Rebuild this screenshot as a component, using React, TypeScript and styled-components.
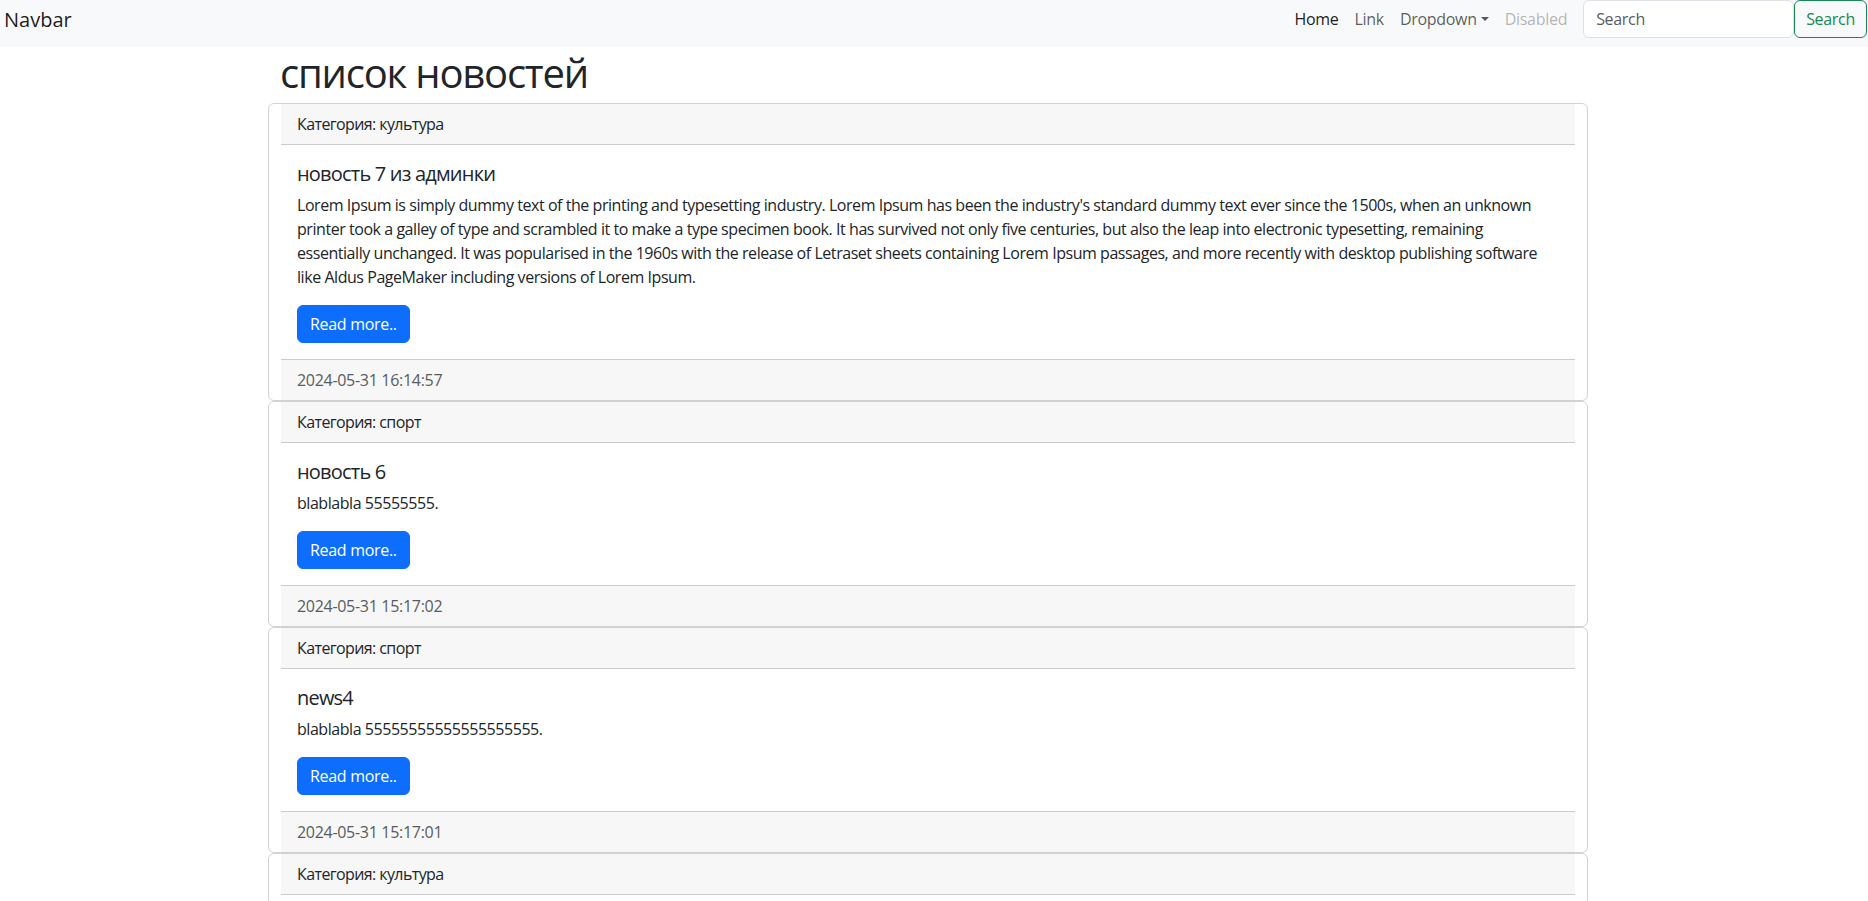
import React from 'react';
import styled, { createGlobalStyle } from 'styled-components';

const GlobalStyle = createGlobalStyle`
  * {
    box-sizing: border-box;
  }
  body {
    margin: 0;
    background: #fff;
    color: #212529;
    font-family: 'Open Sans', 'Noto Sans', sans-serif;
    font-size: 16px;
    line-height: 1.5;
  }
`;

const COLORS = {
  TEXT: '#212529',
  BORDER: 'rgba(0, 0, 0, 0.175)',
  CAP: '#f7f7f7',
  PRIMARY: '#0d6efd',
  SUCCESS: '#198754',
};

const NavbarRoot = styled.nav`
  display: flex;
  justify-content: space-between;
  align-items: flex-start;
  height: 47px;
  background: #f8f9fa;
`;

const Brand = styled.a`
  margin-left: 4px;
  padding: 5px 0;
  font-size: 20px;
  line-height: 30px;
  color: rgba(0, 0, 0, 0.9);
  text-decoration: none;
`;

const RightSection = styled.div`
  display: flex;
  align-items: flex-start;
  margin-right: 1px;
`;

const NavList = styled.ul`
  display: flex;
  list-style: none;
  margin: 0 8px 0 0;
  padding: 0;
`;

const NavLink = styled.a<{ $active?: boolean; $disabled?: boolean }>`
  display: block;
  padding: 7px 8px;
  line-height: 24px;
  letter-spacing: -0.3px;
  text-decoration: none;
  color: ${(p) =>
    p.$active ? 'rgba(0, 0, 0, 0.9)' : p.$disabled ? 'rgba(0, 0, 0, 0.3)' : 'rgba(0, 0, 0, 0.65)'};
`;

const Caret = styled.span`
  display: inline-block;
  margin-left: 0.255em;
  vertical-align: 0.255em;
  border-top: 0.3em solid;
  border-right: 0.3em solid transparent;
  border-left: 0.3em solid transparent;
`;

const SearchForm = styled.form`
  display: flex;
`;

const SearchInput = styled.input`
  width: 211px;
  height: 38px;
  padding: 6px 12px;
  font-family: inherit;
  font-size: 16px;
  letter-spacing: -0.3px;
  color: ${COLORS.TEXT};
  background: #fff;
  border: 1px solid #dee2e6;
  border-radius: 6px;
  &::placeholder {
    color: #595c5f;
  }
`;

const SearchButton = styled.button`
  height: 38px;
  padding: 6px 11px;
  font-family: inherit;
  font-size: 16px;
  letter-spacing: -0.3px;
  color: ${COLORS.SUCCESS};
  background: transparent;
  border: 1px solid ${COLORS.SUCCESS};
  border-radius: 6px;
`;

// the reference was taken with a vertical scrollbar, which shifts the centred column left
const Page = styled.div`
  padding-right: 12px;
`;

const Main = styled.main`
  width: 1320px;
  margin: 0 auto;
`;

const PageTitle = styled.h1`
  margin: 2px 0 6px;
  padding: 0 12px;
  font-size: 40px;
  font-weight: 500;
  line-height: 48px;
  letter-spacing: -1.2px;
`;

const Card = styled.article`
  display: flex;
  flex-direction: column;
  padding: 0 12px;
  border: 1px solid ${COLORS.BORDER};
  border-radius: 6px;
`;

const CardHeader = styled.div`
  padding: 8px 16px;
  line-height: 24px;
  letter-spacing: -0.6px;
  background: ${COLORS.CAP};
  border-bottom: 1px solid ${COLORS.BORDER};
`;

const CardBody = styled.div`
  padding: 16px;
`;

const CardTitle = styled.h5`
  margin: 0 0 8px;
  padding-top: 1px;
  font-size: 20px;
  font-weight: 400;
  line-height: 23px;
  letter-spacing: -0.8px;
`;

const CardText = styled.p`
  margin: 0 0 16px;
  line-height: 24px;
  letter-spacing: -0.45px;
`;

const ReadMore = styled.a`
  display: inline-block;
  padding: 6px 12px;
  line-height: 24px;
  letter-spacing: -0.3px;
  color: #fff;
  background: ${COLORS.PRIMARY};
  border: 1px solid ${COLORS.PRIMARY};
  border-radius: 6px;
  text-decoration: none;
  vertical-align: top;
`;

const CardFooter = styled.div`
  padding: 8px 16px;
  line-height: 24px;
  letter-spacing: -0.3px;
  color: #595c5f;
  background: ${COLORS.CAP};
  border-top: 1px solid ${COLORS.BORDER};
`;

const LOREM =
  "Lorem Ipsum is simply dummy text of the printing and typesetting industry. Lorem Ipsum has been the industry's standard dummy text ever since the 1500s, when an unknown printer took a galley of type and scrambled it to make a type specimen book. It has survived not only five centuries, but also the leap into electronic typesetting, remaining essentially unchanged. It was popularised in the 1960s with the release of Letraset sheets containing Lorem Ipsum passages, and more recently with desktop publishing software like Aldus PageMaker including versions of Lorem Ipsum.";

const news = [
  { id: 7, category: 'культура', title: 'новость 7 из админки', text: LOREM, date: '2024-05-31 16:14:57' },
  { id: 6, category: 'спорт', title: 'новость 6', text: 'blablabla 55555555.', date: '2024-05-31 15:17:02' },
  { id: 4, category: 'спорт', title: 'news4', text: 'blablabla 55555555555555555555.', date: '2024-05-31 15:17:01' },
  { id: 3, category: 'культура', title: 'news3', text: 'blablabla 555.', date: '2024-05-31 15:16:40' },
];

const App = () => {
  return (
    <>
      <GlobalStyle />
      <NavbarRoot>
        <Brand href="#">Navbar</Brand>
        <RightSection>
          <NavList>
            <li>
              <NavLink href="#" $active>
                Home
              </NavLink>
            </li>
            <li>
              <NavLink href="#">Link</NavLink>
            </li>
            <li>
              <NavLink href="#">
                Dropdown
                <Caret />
              </NavLink>
            </li>
            <li>
              <NavLink $disabled>Disabled</NavLink>
            </li>
          </NavList>
          <SearchForm onSubmit={(e) => e.preventDefault()}>
            <SearchInput type="search" placeholder="Search" />
            <SearchButton type="submit">Search</SearchButton>
          </SearchForm>
        </RightSection>
      </NavbarRoot>
      <Page>
        <Main>
          <PageTitle>список новостей</PageTitle>
          {news.map((item) => (
            <Card key={item.id}>
              <CardHeader>Категория: {item.category}</CardHeader>
              <CardBody>
                <CardTitle>{item.title}</CardTitle>
                <CardText>{item.text}</CardText>
                <ReadMore href="#">Read more..</ReadMore>
              </CardBody>
              <CardFooter>{item.date}</CardFooter>
            </Card>
          ))}
        </Main>
      </Page>
    </>
  );
};

export default App;
